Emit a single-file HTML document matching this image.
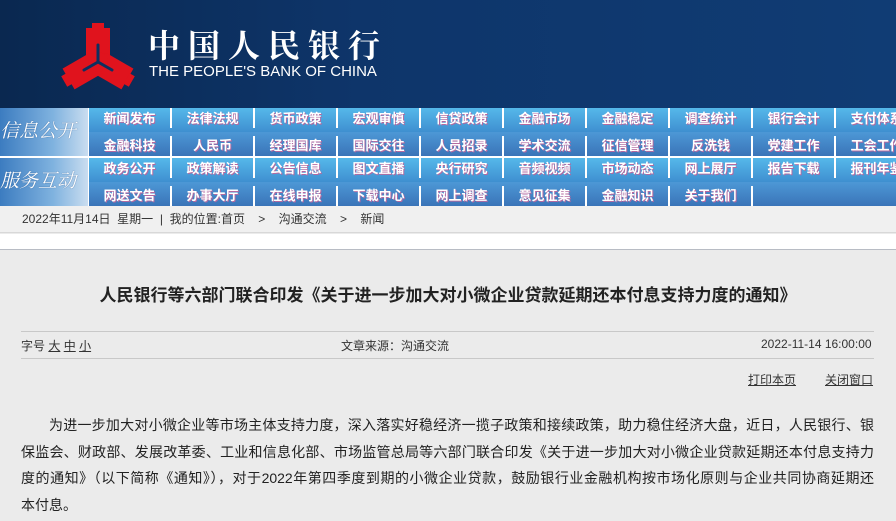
<!DOCTYPE html>
<html><head><meta charset="utf-8"><style>
*{margin:0;padding:0;box-sizing:border-box}
body{width:896px;height:521px;overflow:hidden;background:#ebebeb;font-family:"Liberation Sans","Noto Sans CJK SC",sans-serif;position:relative}
#hdr{position:absolute;left:0;top:0;width:896px;height:108px;background:linear-gradient(90deg,#0a2850 0%,#0e356a 40%,#103c74 100%)}
#nav{position:absolute;top:108px;left:0;width:896px;height:98px;background:#fff}
.blk{position:absolute;left:0;width:896px;height:48px}
.lab{position:absolute;left:0;top:0;width:88px;height:48px;background:linear-gradient(90deg,#3c7cc0 0%,#7fb2df 60%,#c9ddf0 100%);color:#fff;font-style:italic;font-size:19px;line-height:48px;font-family:"Liberation Serif","Noto Serif CJK SC",serif;text-shadow:0 0 1px #24508a;white-space:nowrap}
.row{position:absolute;left:89px;height:24px;width:820px}
.r1{top:0;background:linear-gradient(#55b8ea,#3f8fd0)}
.r2{top:24px;background:linear-gradient(#4d98d6,#3a74b8)}
.c{position:absolute;top:0;width:83px;height:24px;border-right:2px solid #fff;color:#fff;font-size:13px;font-weight:bold;text-align:center;line-height:24px;text-shadow:1px 1px 0 #b36aa0;white-space:nowrap;overflow:hidden}
.r1 .c{height:20px;top:0;line-height:22px}
.r2 .c{height:20px;top:4px;line-height:19px}
#crumb{position:absolute;top:206px;left:0;width:896px;height:27px;background:#f0f0f0;border-bottom:1px solid #d8d8d8;font-size:12px;color:#333;line-height:27px;padding-left:22px}
#white{position:absolute;top:234px;left:0;width:896px;height:16px;background:#fff;border-bottom:1px solid #b8bcc4}
#title{position:absolute;top:281px;left:0;width:896px;text-align:center;font-size:17px;color:#222;font-weight:bold;white-space:nowrap}
.hl{position:absolute;left:21px;width:853px;height:1px;background:#c8c8c8}
.meta{position:absolute;top:337px;font-size:12px;color:#333}
.lk{position:absolute;top:371px;font-size:12px;color:#333;text-decoration:underline}
#p{position:absolute;top:412px;left:21px;width:853px;font-size:14px;line-height:26.5px;color:#222}
#p div{text-align:justify;text-align-last:justify;white-space:nowrap}
</style></head><body>
<div id="hdr">
<svg width="896" height="108" style="position:absolute;left:0;top:0">
<defs><g id="arm"><rect x="-12" y="-34" width="24" height="32"/><rect x="-6" y="-39" width="12" height="6"/></g></defs>
<g transform="translate(98,62)" fill="#e0131d">
<use href="#arm"/>
<use href="#arm" transform="rotate(120)"/>
<use href="#arm" transform="rotate(240)"/>
<circle r="10"/>
</g>
<g transform="translate(98,62)" stroke="#0e3060" stroke-width="3" stroke-linecap="round" fill="none">
<line x1="0" y1="-17" x2="0" y2="0"/><line x1="0" y1="0" x2="-14" y2="8"/><line x1="0" y1="0" x2="14" y2="8"/>
</g>
</svg>
<div style="position:absolute;left:148px;top:26px;font-size:32px;color:#fff;letter-spacing:8px;font-family:'Noto Serif CJK SC',serif;font-weight:bold;line-height:36px">中国人民银行</div>
<div style="position:absolute;left:149px;top:63px;font-size:15px;color:#fff;line-height:17px">THE PEOPLE'S BANK OF CHINA</div>
</div>
<div id="nav">
<div class="blk" style="top:0">
<div class="lab">信息公开</div>
<div class="row r1"><div class="c" style="left:0">新闻发布</div><div class="c" style="left:83px">法律法规</div><div class="c" style="left:166px">货币政策</div><div class="c" style="left:249px">宏观审慎</div><div class="c" style="left:332px">信贷政策</div><div class="c" style="left:415px">金融市场</div><div class="c" style="left:498px">金融稳定</div><div class="c" style="left:581px">调查统计</div><div class="c" style="left:664px">银行会计</div><div class="c" style="left:747px">支付体系</div></div>
<div class="row r2"><div class="c" style="left:0">金融科技</div><div class="c" style="left:83px">人民币</div><div class="c" style="left:166px">经理国库</div><div class="c" style="left:249px">国际交往</div><div class="c" style="left:332px">人员招录</div><div class="c" style="left:415px">学术交流</div><div class="c" style="left:498px">征信管理</div><div class="c" style="left:581px">反洗钱</div><div class="c" style="left:664px">党建工作</div><div class="c" style="left:747px">工会工作</div></div>
</div>
<div class="blk" style="top:50px">
<div class="lab">服务互动</div>
<div class="row r1"><div class="c" style="left:0">政务公开</div><div class="c" style="left:83px">政策解读</div><div class="c" style="left:166px">公告信息</div><div class="c" style="left:249px">图文直播</div><div class="c" style="left:332px">央行研究</div><div class="c" style="left:415px">音频视频</div><div class="c" style="left:498px">市场动态</div><div class="c" style="left:581px">网上展厅</div><div class="c" style="left:664px">报告下载</div><div class="c" style="left:747px">报刊年鉴</div></div>
<div class="row r2"><div class="c" style="left:0">网送文告</div><div class="c" style="left:83px">办事大厅</div><div class="c" style="left:166px">在线申报</div><div class="c" style="left:249px">下载中心</div><div class="c" style="left:332px">网上调查</div><div class="c" style="left:415px">意见征集</div><div class="c" style="left:498px">金融知识</div><div class="c" style="left:581px">关于我们</div><div class="c" style="left:664px;border:none"></div></div>
</div>
</div>
<div id="crumb">2022年11月14日&nbsp;&nbsp;星期一&nbsp;&nbsp;|&nbsp;&nbsp;我的位置:首页&nbsp;&nbsp;&nbsp;&nbsp;&gt;&nbsp;&nbsp;&nbsp;&nbsp;沟通交流&nbsp;&nbsp;&nbsp;&nbsp;&gt;&nbsp;&nbsp;&nbsp;&nbsp;新闻</div>
<div id="white"></div>
<div id="title">人民银行等六部门联合印发《关于进一步加大对小微企业贷款延期还本付息支持力度的通知》</div>
<div class="hl" style="top:331px"></div>
<div class="hl" style="top:358px"></div>
<div class="meta" style="left:21px">字号 <u>大</u> <u>中</u> <u>小</u></div>
<div class="meta" style="left:341px">文章来源：沟通交流</div>
<div class="meta" style="left:761px">2022-11-14 16:00:00</div>
<div class="lk" style="left:748px">打印本页</div>
<div class="lk" style="left:825px">关闭窗口</div>
<div id="p">
<div style="padding-left:28px">为进一步加大对小微企业等市场主体支持力度，深入落实好稳经济一揽子政策和接续政策，助力稳住经济大盘，近日，人民银行、银</div>
<div>保监会、财政部、发展改革委、工业和信息化部、市场监管总局等六部门联合印发《关于进一步加大对小微企业贷款延期还本付息支持力</div>
<div>度的通知》（以下简称《通知》），对于2022年第四季度到期的小微企业贷款，鼓励银行业金融机构按市场化原则与企业共同协商延期还</div>
<div style="text-align-last:left">本付息。</div>
</div>
</body></html>
